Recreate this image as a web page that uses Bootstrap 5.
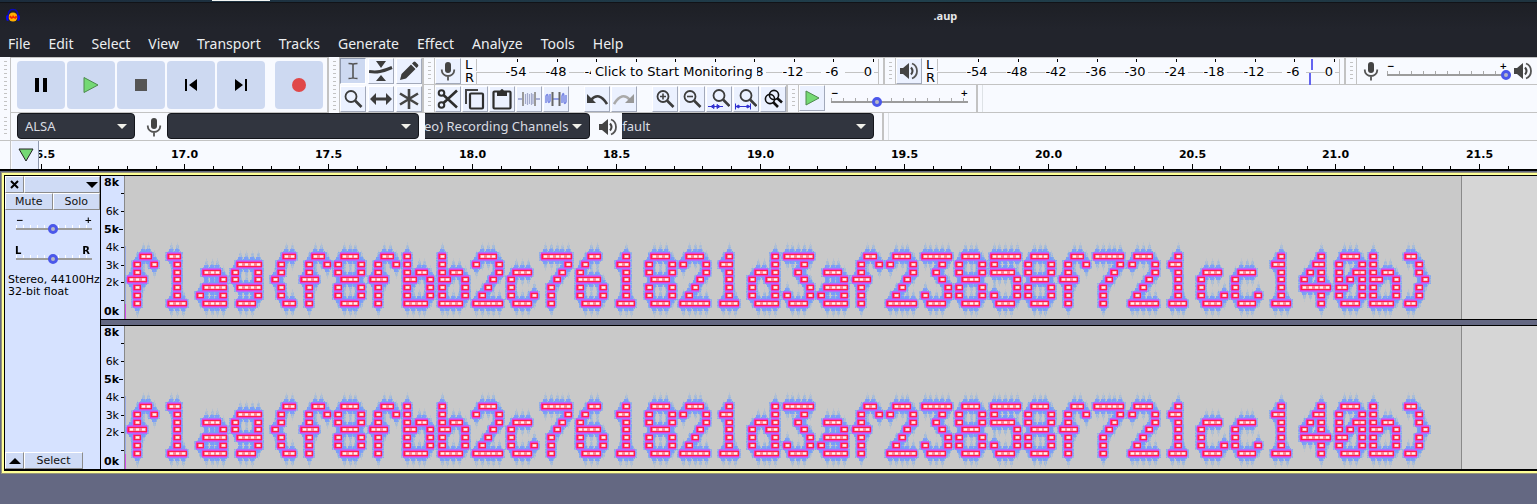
<!DOCTYPE html>
<html lang="en">
<head>
<meta charset="utf-8">
<meta name="viewport" content="width=device-width, initial-scale=1">
<title>.aup</title>
<link href="https://cdn.jsdelivr.net/npm/bootstrap@5.3.0/dist/css/bootstrap.min.css" rel="stylesheet">
<style>
:root{--paper:#f8faff;--line:#c3c3c3;--btn:#ebf1ff;--press:#cdd9f1;--panel:#d6e2ff;--slate:#646882}
body{background:var(--slate);font-family:"DejaVu Sans",sans-serif;font-size:11px;line-height:12px;color:#000;overflow-x:hidden}
button{padding:0;border:0;color:#000}
svg{display:block;flex:none}
.desk-strip{height:3px;background:linear-gradient(90deg,#1c2c3c,#203f4c 60%,#1f3440);border-bottom:1px solid #111318}
.desk-tab{width:58px;height:1px;margin-left:212px;background:#f4f6f4}
.title-bar{height:26px;background:linear-gradient(#1d1f25,#22242c);color:#e6e8ea;font:bold 11px/26px "Noto Sans",sans-serif}
.title-space{flex:20 1 0;padding-left:5px}
.title-name{flex:13 1 0}
.menu-bar{height:28px;background:#22242c;padding-left:8px;gap:18px;font:14px/30px "Noto Sans",sans-serif}
.menu-bar a{color:#eceef0;text-decoration:none}
.dock{background:var(--paper)}
.dock-row{height:28px;border-bottom:1px solid var(--line);background:var(--paper)}
.dock .dock-row:first-child{border-top:1px solid var(--line)}
.grip{width:11px;flex:none;align-self:stretch;border-right:1px solid var(--line);padding:4px 3px 3px 4px}
.grip::before{content:"";display:block;height:100%;background:repeating-linear-gradient(var(--line) 0 1px,transparent 1px 4px)}
.bar-end{border-right:2px solid var(--line)}
.transport{padding:3px 4px 3px 6px;gap:2px;border-top:1px solid var(--line);border-bottom:1px solid var(--line)}
.big-btn{width:48px;height:48px;border-radius:4px;background:var(--press);display:grid;place-items:center}
.tool-grid{display:grid;grid-template-columns:repeat(3,26px);gap:2px;border-top:1px solid var(--line);border-bottom:1px solid var(--line)}
.tool{width:26px;height:26px;flex:none;background:var(--btn);display:grid;place-items:center;border:1px solid #fff;border-right-color:#a2a9ba;border-bottom-color:#a2a9ba}
.tool.on{background:var(--press);border-color:#8f99ae #fff #fff #8f99ae}
.tool-set{display:flex;gap:1px;margin-right:15px;padding-top:1px}
.tool-set:last-of-type{margin-right:0}
.lr{width:11px;font:13px/13px "DejaVu Sans",sans-serif}
.meter{position:relative;font-size:13px;line-height:16px}
.meter text,.time-rule text{text-anchor:middle}
.monitor{position:absolute;left:115px;top:5px;width:166px;height:18px;background:var(--paper);font-size:13px;line-height:18px;padding-left:4px;text-align:left;white-space:nowrap}
.combo{overflow:hidden;display:flex;justify-content:flex-end;flex:none;height:26px}
.combo select{appearance:none;flex:none;border:1px solid #14161c;border-radius:4px;color:#d9dce2;padding:0 8px 0 7px;height:26px;font:13px/22px "Noto Sans",sans-serif;
 background:url("data:image/svg+xml,%3Csvg xmlns='http://www.w3.org/2000/svg' width='10' height='5'%3E%3Cpath d='M0 0h10L5 5z' fill='%23f0f0ea'/%3E%3C/svg%3E") no-repeat right 7px center #31353f}
.gap-six{margin-left:6px}
.host-mic{margin:0 5px 0 11px}
.w-host{width:118px}.w-host select{width:118px}
.w-dev{width:252px}.w-dev select{width:252px}
.w-chan{width:165px}.w-chan select{width:213px}
.w-out select{width:275px}
.range-box{position:relative;height:22px}
.range-box input{appearance:none;display:block;width:100%;height:10px;margin:0;background:linear-gradient(#9c9c9c,#9c9c9c) 0 4px/100% 2px no-repeat;position:relative}
.range-box input::-webkit-slider-thumb{appearance:none;width:10px;height:10px;border-radius:50%;border:3px solid #4b58ea;background:#b8b8c4}
.range-ticks{height:3px;margin-bottom:-4px;background:repeating-linear-gradient(90deg,#aaa 0 1px,transparent 1px 12px)}
.range-ends{font:bold 9px/9px "DejaVu Sans",sans-serif;display:flex;justify-content:space-between}
.w-level{width:124px}.w-speed{width:137px}
.time-rule{height:30px;background:var(--paper);border-bottom:2px solid #000;font-weight:bold}
.pin{width:27px;margin-left:1px;background:var(--btn);border-right:1px solid #8f99ae}
.pin-edge{width:11px;border-right:1px solid var(--line)}
.time-rule #timeline{flex:1 1 0;min-width:0}
.track{margin:2px 0 0 2px;border:2px solid #ffff96;border-right:0;outline:1px solid #96957a}
.track-in{border:1px solid #000;border-width:1px 0 2px 1px}
.panel{width:96px;flex:none;background:var(--panel);border-right:1px solid #000}
.flat{background:#cfdbf5;border:1px solid #fff;border-right-color:#8c8c8c;border-bottom-color:#8c8c8c;height:17px;line-height:15px;text-align:center;color:#111}
.shut{width:19px;display:grid;place-items:center}
.pick{width:59px}
.gain{width:76px;margin:6px 0 0 11px}
.gain + .gain{margin-top:4px}
.gain .range-ticks{height:5px;margin-bottom:-6px;background:repeating-linear-gradient(90deg,#fff 0 1px,transparent 1px 7px)}
.gain .pan-ends{font-size:10px;margin:0 2px 0 -1px}
.info{margin:2px 0 0 3px;white-space:nowrap}
.chan{height:143px}
.chan-rule{width:24px;flex:none;background:var(--panel);border-right:1px solid #888}
.chan-gap{height:7px;background:var(--slate);border-top:1px solid #000;border-bottom:1px solid #000}
.clip{width:1337px;flex:none;background:#c9c9c9;border-right:1px solid #8a8a8a}
.past{background:#d6d6d6}
</style>
</head>
<body class="d-flex flex-column min-vh-100">
<svg width="0" height="0" class="position-absolute" aria-hidden="true">
 <symbol id="i-mic" viewBox="0 0 16 20"><rect x="5" y="1" width="6" height="11" rx="3" fill="#444"/><path d="M1.800 8.500v1a6.200 5.500 0 0 0 12.400 0v-1M8 15v4.500" fill="none" stroke="#555" stroke-width="1.800"/></symbol>
 <symbol id="i-spk" viewBox="0 0 20 18"><path d="M1 6h3l6-5v16l-6-5H1z" fill="#444"/><path d="M12 5.500q3 3.500 0 7" fill="none" stroke="#444" stroke-width="2"/><path d="M13 1.500q5 2 5 7.500t-5 7.500" fill="none" stroke="#555" stroke-width="1.800"/></symbol>
 <symbol id="i-lens" viewBox="0 0 20 20"><circle cx="8" cy="7.500" r="5.500" fill="none" stroke="#3c3c3c" stroke-width="1.800"/><path d="M12 11.500l6.500 6.500" stroke="#3c3c3c" stroke-width="2.600"/></symbol>
</svg>

<div class="desk-strip"><div class="desk-tab"></div></div>
<header>
 <div class="title-bar d-flex">
  <div class="title-space d-flex align-items-center"><svg width="16" height="16" viewBox="0 0 16 16"><circle cx="8" cy="9" r="4.500" fill="#ffb000"/><path d="M4 9l1.500-1.500L7 9l1-2 1.500 2L11 7.500 12.500 9l-2 2-2-1-2 1z" fill="#f02800"/><path d="M3 8C3 2 6 1.500 8 1.500S13 2 13 8" fill="none" stroke="#0a0ab4" stroke-width="1.600"/><path d="M1.200 7.500L3.500 7v6l-2-.5q-1-2.500-.3-5zM14.800 7.500L12.500 7v6l2-.5q1-2.500.3-5z" fill="#0808f0"/></svg></div>
  <div class="title-name">.aup</div>
 </div>
 <nav class="menu-bar d-flex" aria-label="Menu">
  <a href="#">File</a><a href="#">Edit</a><a href="#">Select</a><a href="#">View</a><a href="#">Transport</a><a href="#">Tracks</a><a href="#">Generate</a><a href="#">Effect</a><a href="#">Analyze</a><a href="#">Tools</a><a href="#">Help</a>
 </nav>
</header>

<section class="dock d-flex">
 <div class="grip"></div>
 <div class="transport d-flex bar-end">
  <button class="big-btn" aria-label="Pause"><svg width="14" height="16"><path d="M1 1h4v14H1zM9 1h4v14H9z"/></svg></button>
  <button class="big-btn" aria-label="Play"><svg width="18" height="18"><path d="M2 1.500l14 7.500L2 16.500z" fill="#74d974" stroke="#4d8a4d"/></svg></button>
  <button class="big-btn" aria-label="Stop"><svg width="12" height="12"><path d="M0 0h12v12H0z" fill="#555"/></svg></button>
  <button class="big-btn" aria-label="Skip to start"><svg width="14" height="14"><path d="M1 1h2v12H1zM13 1v12L5 7z"/></svg></button>
  <button class="big-btn" aria-label="Skip to end"><svg width="14" height="14"><path d="M11 1h2v12h-2zM1 1v12l8-6z"/></svg></button>
  <button class="big-btn ms-2" aria-label="Record"><svg width="14" height="14"><circle cx="7" cy="7" r="7" fill="#e04848"/></svg></button>
 </div>
 <div class="grip"></div>
 <div class="tool-grid bar-end">
  <button class="tool on" aria-label="Selection tool"><svg width="12" height="18" viewBox="0 0 12 18"><path d="M1.500 1.500q4 0 4.500 1 .5-1 4.500-1M6 2.500v13M1.500 16.500q4 0 4.500-1 .5 1 4.500 1" fill="none" stroke="#555" stroke-width="1.600"/></svg></button>
  <button class="tool" aria-label="Envelope tool"><svg width="24" height="20" viewBox="0 0 24 20"><path d="M7 0h10l-5 7zM7 20h10l-5-6z" fill="#3c3c3c"/><path d="M0 10.500q6 1 11 0t12-4" fill="none" stroke="#3c3c3c" stroke-width="3"/></svg></button>
  <button class="tool" aria-label="Draw tool"><svg width="20" height="20" viewBox="0 0 20 20"><path d="M1 19l1.500-6L12 3.500 16.500 8 7 17.500zM13 2.500L14.500 1q1-.8 2 0L19 3.500q.8 1 0 2L17.500 7z" fill="#3c3c3c"/></svg></button>
  <button class="tool" aria-label="Zoom tool"><svg width="20" height="20"><use href="#i-lens"/></svg></button>
  <button class="tool" aria-label="Time shift tool"><svg width="22" height="12" viewBox="0 0 22 12"><path d="M0 6l6-6v4.500h10V0l6 6-6 6V7.500H6V12z" fill="#3c3c3c"/></svg></button>
  <button class="tool" aria-label="Multi tool"><svg width="20" height="20" viewBox="0 0 20 20"><path d="M10 0v20M1 4.500l18 11M19 4.500l-18 11" stroke="#444" stroke-width="2.600"/></svg></button>
 </div>
 <div class="flex-grow-1">
  <div class="dock-row d-flex">
   <div class="grip"></div>
   <button class="tool" aria-label="Record meter"><svg width="16" height="20"><use href="#i-mic"/></svg></button>
   <div class="lr ms-1"><div>L</div><div>R</div></div>
   <div class="meter" data-level="0"><button class="monitor">Click to Start Monitoring</button></div>
   <div class="bar-end ps-1"></div>
   <div class="grip"></div>
   <button class="tool" aria-label="Playback meter"><svg width="20" height="18"><use href="#i-spk"/></svg></button>
   <div class="lr ms-1"><div>L</div><div>R</div></div>
   <div class="meter" data-level="1"></div>
   <div class="bar-end ps-1"></div>
   <div class="grip"></div>
   <svg class="align-self-center gap-six" width="16" height="20"><use href="#i-mic"/></svg>
   <div class="range-box w-level ms-2 pt-1">
    <div class="range-ends"><span>−</span><span class="pe-1">+</span></div><div class="range-ticks"></div>
    <input type="range" value="100" aria-label="Recording volume">
   </div>
   <svg class="align-self-center" width="24" height="18" viewBox="-2 0 24 18"><use href="#i-spk" width="20" height="18"/></svg>
  </div>
  <div class="dock-row d-flex">
   <div class="grip"></div>
   <div class="tool-set">
   <button class="tool" aria-label="Cut"><svg width="22" height="22" viewBox="0 0 22 22"><g fill="none" stroke="#2e2e2e"><circle cx="4.500" cy="5" r="2.800" stroke-width="2"/><circle cx="4.500" cy="17" r="2.800" stroke-width="2"/><path d="M6.500 7L20 19.500M6.500 15L20 2.500" stroke-width="2.600"/></g></svg></button>
   <button class="tool" aria-label="Copy"><svg width="22" height="22" viewBox="0 0 22 22"><path d="M2 16V2h12" fill="none" stroke="#444" stroke-width="2"/><rect x="6" y="5.500" width="13" height="15" rx="1" fill="none" stroke="#2e2e2e" stroke-width="2.200"/></svg></button>
   <button class="tool" aria-label="Paste"><svg width="22" height="22" viewBox="0 0 22 22"><rect x="2.500" y="3.500" width="17" height="17" rx="1" fill="none" stroke="#2e2e2e" stroke-width="2.200"/><path d="M6 3h3q2-4 4 0h3v5H6z" fill="#2e2e2e"/></svg></button>
   <button class="tool" aria-label="Trim audio"><svg width="22" height="16" viewBox="0 0 22 16"><path d="M0 8h5M17 8h5" stroke="#a8b0d8" stroke-width="2"/><path d="M5 1v14M17 1v14" stroke="#999" stroke-width="2"/><path d="M7.500 3v10M9.500 2v12M11.500 3v10M13.500 2v12M15 3v10" fill="none" stroke="#a4abcc" stroke-width="1.200"/></svg></button>
   <button class="tool" aria-label="Silence audio"><svg width="22" height="16" viewBox="0 0 22 16"><path d="M1 12V5q1.500-3 2 0v5q.5 3 2 0V3M17 12V5q1.500-5 2 0v6q.5 3 2 0V4M8 8h6" fill="none" stroke="#7a88e4" stroke-width="1.500"/><path d="M7.500 1v14M14.500 1v14" stroke="#666" stroke-width="2"/></svg></button>
   </div>
   <div class="tool-set">
   <button class="tool" aria-label="Undo"><svg width="22" height="14" viewBox="0 0 22 14"><path d="M5 8q8-9 16 4" fill="none" stroke="#3c3c3c" stroke-width="2.600"/><path d="M1 2v9h9z" fill="#3c3c3c"/></svg></button>
   <button class="tool" aria-label="Redo"><svg width="22" height="14" viewBox="0 0 22 14"><path d="M17 8q-8-9-16 4" fill="none" stroke="#aaa" stroke-width="2.600"/><path d="M21 2v9h-9z" fill="#999"/></svg></button>
   </div>
   <div class="tool-set me-0">
   <button class="tool" aria-label="Zoom in"><svg width="20" height="20" viewBox="0 0 20 20"><use href="#i-lens" width="20" height="20"/><path d="M8 4.500v6M5 7.500h6" stroke="#444" stroke-width="1.600"/></svg></button>
   <button class="tool" aria-label="Zoom out"><svg width="20" height="20" viewBox="0 0 20 20"><use href="#i-lens" width="20" height="20"/><path d="M5 7.500h6" stroke="#444" stroke-width="1.600"/></svg></button>
   <button class="tool" aria-label="Fit selection"><svg width="22" height="22" viewBox="0 0 22 22"><use href="#i-lens" x="3" y="0" width="20" height="20"/><path d="M0 18.500h15M6 16.500v4l-3-2zM9 16.500v4l3-2z" stroke="#3030d0" fill="#3030d0"/></svg></button>
   <button class="tool" aria-label="Fit project"><svg width="22" height="22" viewBox="0 0 22 22"><use href="#i-lens" x="3" y="0" width="20" height="20"/><path d="M1 18.500h14M.5 15.500v6M15.500 15.500v6M4 17v3l-3-1.500zM12 17v3l3-1.500z" stroke="#3030d0" fill="#3030d0"/></svg></button>
   <button class="tool" aria-label="Zoom toggle"><svg width="20" height="20" viewBox="0 0 20 20"><g fill="none" stroke="#111" stroke-width="1.600"><circle cx="11" cy="6" r="4.600"/><circle cx="7" cy="10" r="4.600"/><path d="M14 9l5 4.500M10 13l5 5" stroke-width="2.600"/></g></svg></button>
   </div>
   <div class="bar-end"></div>
   <div class="grip"></div>
   <button class="tool" aria-label="Play at speed"><svg width="17" height="16"><path d="M2 1l13 7-13 7z" fill="#74d974" stroke="#4d8a4d"/></svg></button>
   <div class="range-box w-speed gap-six pt-1">
    <div class="range-ends"><span>−</span><span>+</span></div><div class="range-ticks"></div>
    <input type="range" value="32" aria-label="Playback speed">
   </div>
   <div class="ps-2 bar-end border-1"></div><div class="ps-1 border-end"></div>
  </div>
 </div>
</section>

<div class="dock-row d-flex">
 <div class="grip"></div>
 <div class="combo w-host gap-six"><select aria-label="Audio host"><option>ALSA</option></select></div>
 <svg class="align-self-center host-mic" width="16" height="20"><use href="#i-mic"/></svg>
 <div class="combo w-dev"><select aria-label="Recording device"><option></option></select></div>
 <div class="combo w-chan gap-six"><select aria-label="Recording channels"><option>2 (Stereo) Recording Channels</option></select></div>
 <svg class="align-self-center ms-2" width="20" height="18"><use href="#i-spk"/></svg>
 <div class="combo w-dev w-out ms-1"><select aria-label="Playback device"><option>default</option></select></div>
 <div class="ps-2 bar-end border-1"></div><div class="ps-1 border-end"></div>
</div>

<div class="time-rule d-flex">
 <div class="pin-edge"></div>
 <button class="pin" aria-label="Pinned play head"><svg class="mx-auto" width="20" height="14"><path d="M4 1h14l-7 12z" fill="#74d974" stroke="#222"/></svg></button>
 <svg id="timeline" height="28"></svg>
</div>

<main class="track">
 <div class="track-in d-flex">
  <aside class="panel d-flex flex-column">
   <div class="d-flex"><button class="flat shut" aria-label="Close track"><svg width="9" height="9"><path d="M1 1l7 7M8 1L1 8" stroke="#000" stroke-width="2"/></svg></button><button class="flat flex-grow-1 d-flex justify-content-end align-items-center" aria-label="Track menu"><svg width="14" height="6"><path d="M1 0h12L7 6z"/></svg></button></div>
   <div class="d-flex"><button class="flat w-50">Mute</button><button class="flat w-50">Solo</button></div>
   <div class="range-box gain"><div class="range-ends"><span>−</span><span>+</span></div><div class="range-ticks"></div><input type="range" value="49" aria-label="Gain"></div>
   <div class="range-box gain pt-1"><div class="range-ends pan-ends"><span>L</span><span>R</span></div><div class="range-ticks"></div><input type="range" value="49" aria-label="Pan"></div>
   <div class="info pt-2">Stereo, 44100Hz<br>32-bit float</div>
   <div class="d-flex mt-auto"><button class="flat shut" aria-label="Collapse track"><svg width="12" height="6"><path d="M0 6h12L6 0z"/></svg></button><button class="flat pick">Select</button></div>
  </aside>
  <div class="flex-grow-1 overflow-hidden">
   <div class="chan d-flex"><svg class="chan-rule" height="143"></svg><div class="clip"><canvas class="d-block" width="1336" height="143" role="img" aria-label="Left channel spectrogram"></canvas></div><div class="past flex-grow-1"></div></div>
   <div class="chan-gap"></div>
   <div class="chan d-flex"><svg class="chan-rule" height="143"></svg><div class="clip"><canvas class="d-block" width="1336" height="143" role="img" aria-label="Right channel spectrogram"></canvas></div><div class="past flex-grow-1"></div></div>
  </div>
 </div>
</main>

<script src="https://cdn.jsdelivr.net/npm/bootstrap@5.3.0/dist/js/bootstrap.bundle.min.js"></script>
<script>
// Level meters: one tick and label for each 6 dB.
document.querySelectorAll('.meter').forEach(m => {
  let s = '<path d="M.5 1v12M.5 15v12M0 14.500h402M402.500 1v26" stroke="#c3c3c3" fill="none"/>';
  for (let i = 0; i < 10; i++) {
    const x = Math.round(41 + i * 39.5), v = i * 6 - 54, t = v === 0 ? x - 4 : x, w = v === 0 ? 5 : 12;
    s += `<rect x="${t - w}" y="5" width="${2 * w}" height="18" fill="#f8faff"/><path d="M${x + .5} 1v3" stroke="#000"/><text x="${t - 1}" y="18">${v}</text>`;
  }
  if (m.dataset.level === '1') s += '<path d="M375 1v11M373 15v12" stroke="#6464f0" stroke-width="2"/>';
  m.insertAdjacentHTML('afterbegin', `<svg width="403" height="27">${s}</svg>`);
});

// Timeline: a label each half second, four small ticks between.
let tl = '';
for (let i = 0; i < 56; i++) {
  const x = Math.floor(2 + i * 28.775) + .5, major = i % 5 === 0;
  tl += `<path d="M${x} ${major ? 23 : 25}V28" stroke="#000"/>`;
  if (major) tl += `<text x="${x}" y="17">${(16.5 + i / 10).toFixed(1)}</text>`;
}
document.getElementById('timeline').innerHTML = tl;

// Frequency scale.
document.querySelectorAll('.chan-rule').forEach(r => {
  let s = '';
  for (let k = 0; k <= 8; k++) {
    const y = k === 8 ? 6 : k === 0 ? 135 : Math.round(142 - k * 17.8);
    if (k > 0 && k < 8) s += `<path d="M${k === 5 ? 18 : 20} ${y + .5}h4" stroke="#000"/>`;
    if (k !== 1 && k !== 7) s += `<text x="18" y="${y + 4}" text-anchor="end" font-weight="${k % 8 === 0 || k === 5 ? 'bold' : 'normal'}">${k}k</text>`;
  }
  r.innerHTML = s;
});

// Spectrogram: glyphs on a 5 by 7 grid, each lit cell a short tone burst.
const G = {
 f:['..XX.','.X..X','.X...','XXX..','.X...','.X...','.X...'],
 l:['.XX..','..X..','..X..','..X..','..X..','..X..','.XXX.'],
 a:['.....','.....','.XXX.','....X','.XXXX','X...X','.XXXX'],
 g:['.....','.XXXX','X...X','X...X','.XXXX','....X','.XXX.'],
 '{':['...XX','..X..','..X..','.X...','..X..','..X..','...XX'],
 '}':['XX...','..X..','..X..','...X.','..X..','..X..','XX...'],
 8:['.XXX.','X...X','X...X','.XXX.','X...X','X...X','.XXX.'],
 b:['X....','X....','X.XX.','XX..X','X...X','X...X','XXXX.'],
 2:['.XXX.','X...X','....X','...X.','..X..','.X...','XXXXX'],
 c:['.....','.....','.XXX.','X....','X....','X...X','.XXX.'],
 7:['XXXXX','....X','...X.','..X..','.X...','.X...','.X...'],
 6:['..XX.','.X...','X....','XXXX.','X...X','X...X','.XXX.'],
 1:['..X..','.XX..','..X..','..X..','..X..','..X..','.XXX.'],
 d:['....X','....X','.XX.X','X..XX','X...X','X...X','.XXXX'],
 3:['XXXXX','...X.','..X..','...X.','....X','X...X','.XXX.'],
 5:['XXXXX','X....','XXXX.','....X','....X','X...X','.XXX.'],
 4:['...X.','..XX.','.X.X.','X..X.','XXXXX','...X.','...X.'],
 0:['.XXX.','X...X','X..XX','X.X.X','XX..X','X...X','.XXX.']
};
const cells = [];
[...'flag{f8fbb2c761821d3af23858f721cc140b}'].forEach((c, i) => G[c].forEach((row, r) => [...row].forEach((v, k) => {
  if (v === 'X') cells.push([Math.round(2 + i * 34.5 + k * 5.75), 78 + Math.round(r * 7.83)]);
})));
document.querySelectorAll('canvas').forEach(cv => {
  const g = cv.getContext('2d');
  let seed = 7;
  const rnd = () => (seed = (seed * 16807) % 2147483647) / 2147483647;
  const layer = (color, dx, dy, w, h) => { g.fillStyle = color; cells.forEach(([x, y]) => g.fillRect(x + dx, y + dy, w, h)); };
  cells.forEach(([x, y]) => {
    for (let d = -12; d <= 16; d++) {
      const far = Math.abs(d - 2) / 15, half = far > .75 ? 0 : far > .5 ? 1 : far > .35 ? 2 : 3;
      for (let p = -half; p <= half; p++) {
        g.fillStyle = `rgba(105,165,245,${Math.min(1, (1.05 - far) * (.4 + .8 * rnd()))})`;
        g.fillRect(x + 4 + p, y + d, 1, 1);
      }
    }
  });
  cells.forEach(([x, y]) => {
    for (let d = -2; d <= 6; d++) for (const p of [-2, -1, 8, 9]) {
      g.fillStyle = `rgba(110,160,250,${.3 + .5 * rnd()})`;
      g.fillRect(x + p, y + d, 1, 1);
    }
  });
  layer('rgba(115,150,255,.75)', 2, -5, 4, 15);
  layer('#a080ff', -1, 0, 10, 5);
  layer('#b070f8', 0, -2, 8, 9);
  layer('#e040d8', 0, -1, 8, 7);
  layer('#ff28a0', 0, 0, 8, 5);
  layer('#ff2048', 1, 0, 7, 5);
  layer('#ff8098', 2, 1, 5, 3);
  cells.forEach(([x, y]) => { if (cells.some(c => c[1] === y && (c[0] - x === 6 || c[0] - x === 5))) { g.fillStyle = '#ff8098'; g.fillRect(x + 5, y + 1, 4, 3); } });
  layer('#ffc4cc', 3, 1, 3, 3);
  layer('#fff2f2', 3, 2, 3, 1);
  g.fillStyle = 'rgba(120,150,255,.6)'; g.fillRect(0, 70, 1, 73);
  g.fillStyle = '#d050f0'; g.fillRect(0, 128, 1, 15);
});
</script>
</body>
</html>
